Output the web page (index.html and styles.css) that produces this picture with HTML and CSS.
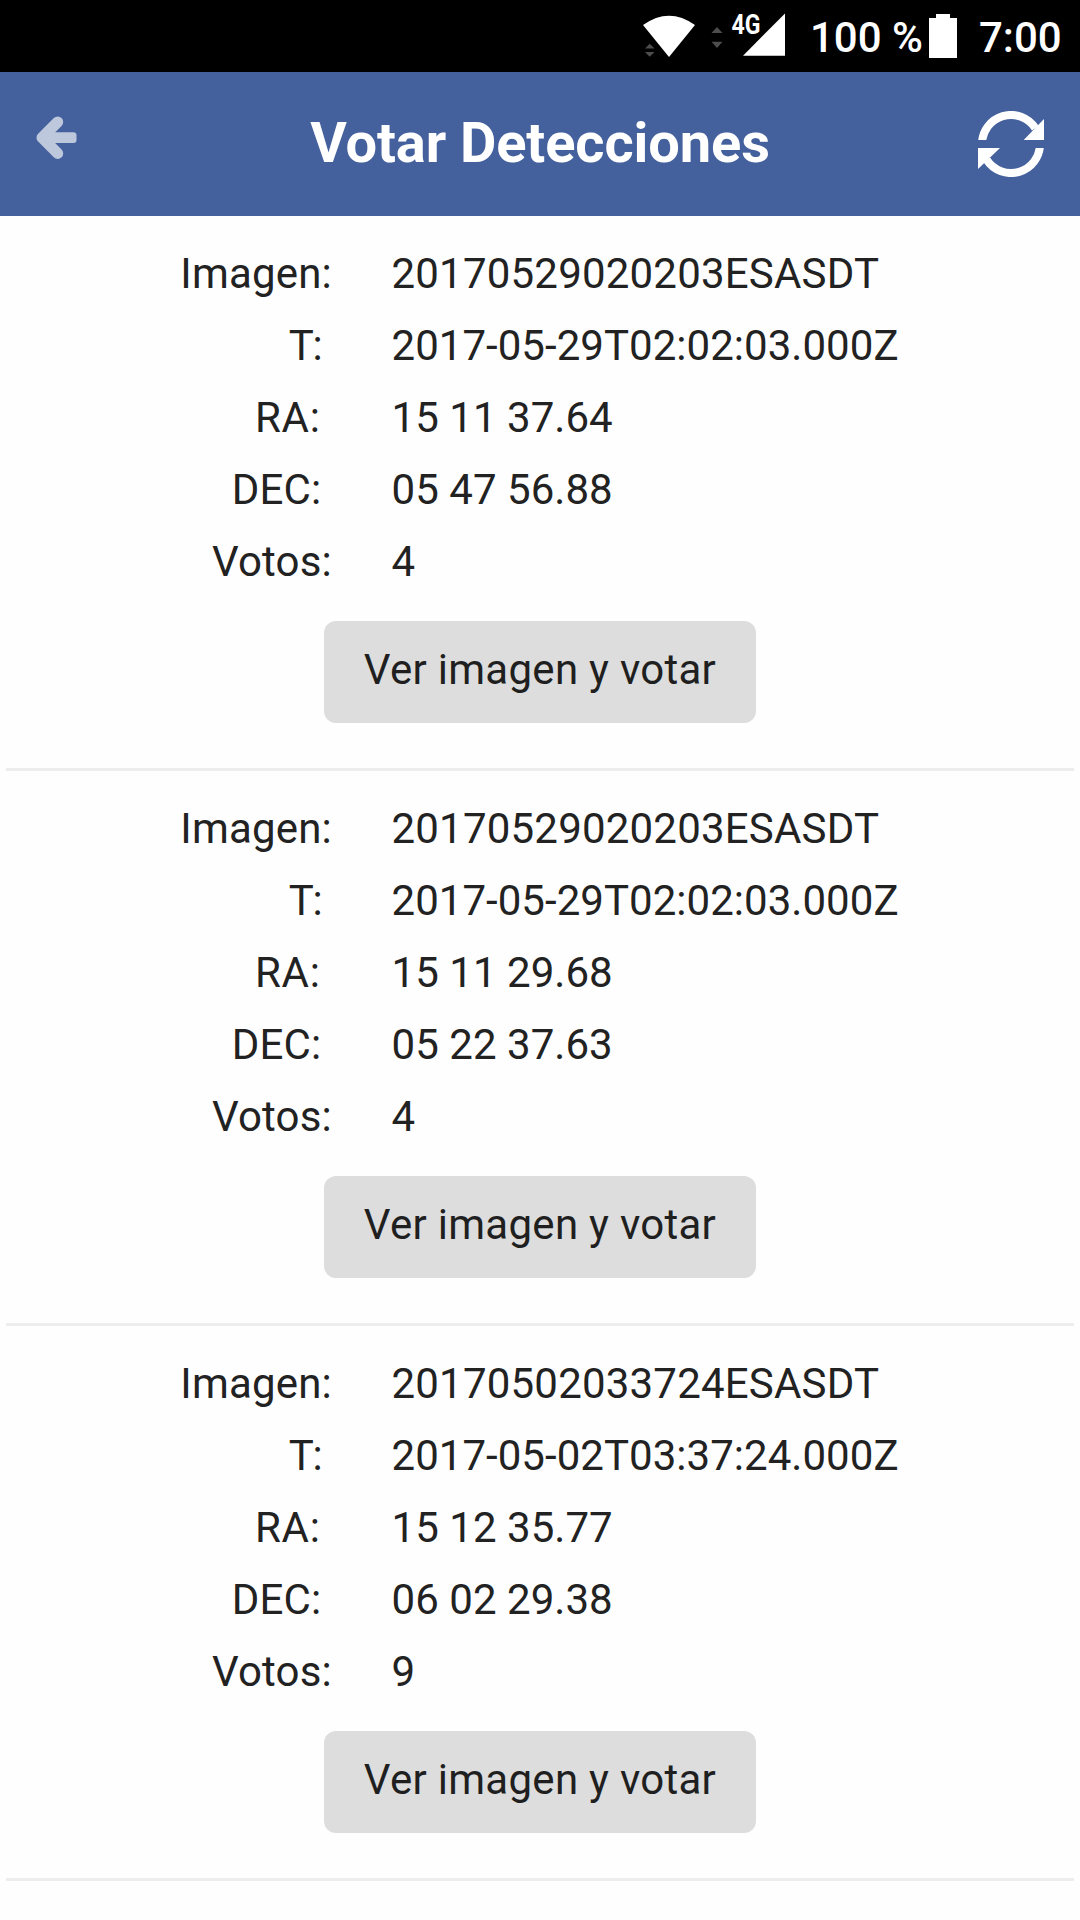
FILE: index.html
```html
<!DOCTYPE html>
<html lang="es">
<head>
<meta charset="utf-8">
<title>Votar Detecciones</title>
<link rel="stylesheet" href="styles.css">
</head>
<body>
<div class="status">
  <svg class="wifi" viewBox="643 0 52 72" width="52" height="72">
    <path d="M643 25Q669 6.300 695 25L669 57Z" fill="#fff"/>
    <path d="M645 48.500h9.500l-4.750-4.800zM645 52h9.500l-4.750 4.800z" fill="#4d4d4d"/>
  </svg>
  <svg class="signal" viewBox="711 0 74 72" width="74" height="72">
    <path d="M711.500 33h11l-5.500-6zM711.500 41.700h11l-5.500 6.300z" fill="#4d4d4d"/>
    <path d="M743 55.700h42V13.500z" fill="#fff"/>
    <text class="net" x="731.500" y="33.800" textLength="29" lengthAdjust="spacingAndGlyphs">4G</text>
  </svg>
  <span class="percent">100 %</span>
  <svg class="battery" viewBox="929 0 28 72" width="28" height="72">
    <path d="M929 18h7v-4h14v4h7v40h-28z" fill="#fff"/>
  </svg>
  <span class="clock">7:00</span>
</div>
<header class="bar">
  <svg class="back" viewBox="36 116 41 43" width="41" height="43">
    <g opacity=".65" fill="#fff">
      <path d="M57.700 122L42 137.700l15.700 15.700" fill="none" stroke="#fff" stroke-width="11" stroke-linecap="round" stroke-linejoin="round"/>
      <path d="M46 132.200h27.500a3 3 0 0 1 3 3v4.800a3 3 0 0 1-3 3H46z"/>
    </g>
  </svg>
  <h1 class="title">Votar Detecciones</h1>
  <svg class="refresh" viewBox="84 63 198 198" width="66" height="66">
    <clipPath id="upper"><path d="M84 63h198v87H84z"/></clipPath>
    <clipPath id="lower"><path d="M84 174h198v87H84z"/></clipPath>
    <g fill="#fff" clip-path="url(#upper)">
      <path d="M96 162A87 87 0 0 1 256 114.600" fill="none" stroke="#fff" stroke-width="24"/>
      <path d="M282 87v63h-61z"/>
    </g>
    <g fill="#fff" clip-path="url(#lower)">
      <path d="M270 162A87 87 0 0 1 110 209.400" fill="none" stroke="#fff" stroke-width="24"/>
      <path d="M84 237v-63h66z"/>
    </g>
  </svg>
</header>
<main class="list">
  <section class="item">
    <dl class="data">
      <dt>Imagen:</dt><dd class="code">20170529020203ESASDT</dd>
      <dt class="time">T:&nbsp;</dt><dd>2017-05-29T02:02:03.000Z</dd>
      <dt class="ra">RA:&nbsp;</dt><dd>15 11 37.64</dd>
      <dt>DEC:&nbsp;</dt><dd>05 47 56.88</dd>
      <dt>Votos:</dt><dd>4</dd>
    </dl>
    <button class="vote">Ver imagen y votar</button>
  </section>
  <section class="item">
    <dl class="data">
      <dt>Imagen:</dt><dd class="code">20170529020203ESASDT</dd>
      <dt class="time">T:&nbsp;</dt><dd>2017-05-29T02:02:03.000Z</dd>
      <dt class="ra">RA:&nbsp;</dt><dd>15 11 29.68</dd>
      <dt>DEC:&nbsp;</dt><dd>05 22 37.63</dd>
      <dt>Votos:</dt><dd>4</dd>
    </dl>
    <button class="vote">Ver imagen y votar</button>
  </section>
  <section class="item">
    <dl class="data">
      <dt>Imagen:</dt><dd class="code">20170502033724ESASDT</dd>
      <dt class="time">T:&nbsp;</dt><dd>2017-05-02T03:37:24.000Z</dd>
      <dt class="ra">RA:&nbsp;</dt><dd>15 12 35.77</dd>
      <dt>DEC:&nbsp;</dt><dd>06 02 29.38</dd>
      <dt>Votos:</dt><dd>9</dd>
    </dl>
    <button class="vote">Ver imagen y votar</button>
  </section>
</main>
</body>
</html>
```
FILE: styles.css
```css
* { box-sizing: border-box; }
body {
  margin: 0;
  background: #fefefe;
  color: #222;
  font-family: Roboto, "Liberation Sans", sans-serif;
  font-size: 42px;
}
svg { display: block; flex: none; }
.status {
  display: flex;
  height: 72px;
  padding-left: 643px;
  background: #000;
  color: #fff;
  font-weight: 500;
  line-height: 76px;
  white-space: nowrap;
}
.signal { margin-left: 16px; }
.net { font-size: 27px; font-weight: 700; fill: #fff; }
.percent { width: 119px; margin-left: 25px; }
.clock { margin-left: 22px; }
.bar {
  display: grid;
  grid-template-columns: 66px 1fr 66px;
  align-items: center;
  height: 144px;
  padding: 0 36px;
  background: #44619d;
  color: #fff;
}
.back { margin-bottom: 13px; }
.title {
  margin: 0;
  font-size: 56px;
  font-weight: 700;
  line-height: 142px;
  height: 144px;
  letter-spacing: -0.1px;
  text-align: center;
}
.list { padding: 0 6px; }
.item {
  display: flex;
  flex-direction: column;
  align-items: center;
  height: 555px;
  padding-top: 22px;
  border-bottom: 3px solid #ededed;
}
.data {
  display: grid;
  grid-template-columns: 326px 1fr;
  column-gap: 59.500px;
  width: 100%;
  margin: 0 0 23px;
  line-height: 72px;
}
.data dt { text-align: right; letter-spacing: 0.2px; }
.data dt.time { letter-spacing: -1.5px; padding-right: 2px; }
.data dt.ra { letter-spacing: 0.8px; }
.data dd { margin: 0; letter-spacing: 0.04px; }
.data dd.code { letter-spacing: 0.2px; }
.vote {
  width: 432px;
  height: 102px;
  padding: 0 0 6px;
  border: 0;
  border-radius: 12px;
  background: #ddd;
  color: #1f1f1f;
  font: inherit;
  letter-spacing: 0.28px;
  white-space: nowrap;
}
```
